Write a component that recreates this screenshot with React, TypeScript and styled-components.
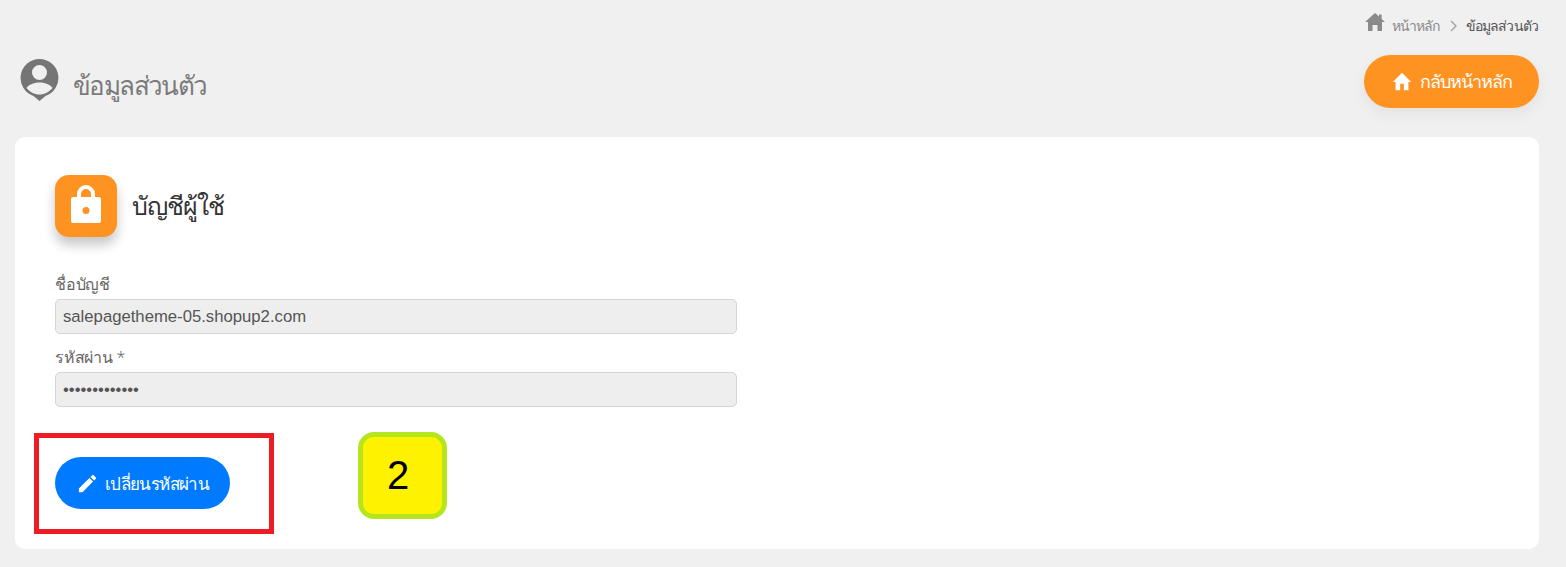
import React from "react";
import styled, { createGlobalStyle } from "styled-components";

const Global = createGlobalStyle`
  html, body { margin: 0; padding: 0; background: #f0f0f0; }
  body { font-family: "Noto Sans", "Liberation Sans", sans-serif; }
  * { box-sizing: border-box; }
`;
const Page = styled.div`
  position: relative;
  width: 1566px;
  height: 567px;
  padding: 0 27px 0 15px;
  overflow: hidden;
  background: #f0f0f0;
`;
const Breadcrumb = styled.nav`
  height: 55px;
  padding: 12px 1px 0 0;
  display: flex;
  justify-content: flex-end;
  align-items: flex-start;
  font-size: 14px;
  line-height: 28px;
  color: #8a8a8a;
  letter-spacing: -0.85px;
`;
const Crumb = styled.span<{ $active?: boolean }>`
  color: ${(p) => (p.$active ? "#555" : "#8a8a8a")};
  margin-left: ${(p) => (p.$active ? "8px" : "7px")};
`;
const Chevron = styled.svg`
  margin: 8px 0 0 10px;
`;
const CrumbHomeIcon = styled.svg`
  margin-top: 1px;
`;
const Header = styled.header`
  height: 82px;
  display: flex;
  justify-content: space-between;
  align-items: flex-start;
`;
const TitleWrap = styled.div`
  display: flex;
  align-items: flex-start;
  padding-left: 5px;
  gap: 14px;
`;
const PersonIcon = styled.svg`
  margin-top: 4px;
`;
const Title = styled.h1`
  margin: 8px 0 0;
  font-size: 26px;
  line-height: 44px;
  font-weight: 300;
  color: #7a7a7a;
  letter-spacing: -1.6px;
`;
const BackButton = styled.button`
  width: 175px;
  height: 53px;
  border: 0;
  border-radius: 27px;
  background: #ff9321;
  color: #fff;
  display: flex;
  align-items: center;
  justify-content: center;
  gap: 7px;
  font: 500 18px "Noto Sans", sans-serif;
  letter-spacing: -0.95px;
  box-shadow: 0 6px 16px rgba(0, 0, 0, 0.06);
`;
const Card = styled.section`
  width: 1524px;
  height: 412px;
  background: #fff;
  border-radius: 10px;
  padding: 38px 40px 0;
`;
const CardHead = styled.div`
  display: flex;
  align-items: center;
  gap: 15px;
  margin-bottom: 36px;
`;
const LockTile = styled.div`
  width: 62px;
  height: 62px;
  padding-bottom: 4px;
  border-radius: 14px;
  background: #ff9321;
  display: flex;
  align-items: center;
  justify-content: center;
  box-shadow: 0 8px 12px rgba(0, 0, 0, 0.22);
`;
const CardTitle = styled.h2`
  margin: 0 0 3px;
  font-size: 25px;
  line-height: 36px;
  font-weight: 300;
  color: #333;
  letter-spacing: -1px;
`;
const Field = styled.div`
  width: 682px;
  margin-bottom: 12px;
`;
const Label = styled.label`
  display: block;
  height: 26px;
  font-size: 16px;
  line-height: 23px;
  font-weight: 300;
  color: #666;
  letter-spacing: -0.25px;
`;
const Input = styled.input`
  display: block;
  width: 100%;
  height: 35px;
  padding: 0 7px;
  background: #eee;
  border: 1px solid #d4d4d4;
  border-radius: 5px;
  font: 16.7px "Liberation Sans", Arial, sans-serif;
  color: #555;
  outline: 0;
`;
const EditButton = styled.button`
  margin-top: 50px;
  width: 175px;
  height: 52px;
  border: 0;
  border-radius: 26px;
  background: #007bff;
  color: #fff;
  display: flex;
  align-items: center;
  justify-content: center;
  gap: 6px;
  font: 500 17px "Noto Sans", sans-serif;
  letter-spacing: -0.6px;
`;
const RedFrame = styled.div`
  position: absolute;
  left: 34px;
  top: 433px;
  width: 240px;
  height: 101px;
  border: 5px solid #ed1c24;
`;
const Badge = styled.div`
  position: absolute;
  left: 358px;
  top: 432px;
  width: 89px;
  height: 87px;
  padding-right: 9px;
  background: #fff200;
  border: 5px solid #b5e61d;
  border-radius: 16px;
  display: flex;
  align-items: center;
  justify-content: center;
  font: 40px "Liberation Sans", Arial, sans-serif;
  color: #000;
`;

const CrumbHome = () => (
  <CrumbHomeIcon width="20" height="18" viewBox="0 0 20 18" fill="#8a8a8a">
    <path d="M10 0l4 3.600V1.500h2.600v4.400L20 9h-3v9h-4.500v-6h-5v6H3V9H0z" />
  </CrumbHomeIcon>
);
const ButtonHome = () => (
  <svg width="22" height="22" viewBox="0 0 24 24" fill="#fff">
    <path d="M10 21v-7h4v7h5v-9h3L12 2 2 12h3v9z" />
  </svg>
);

export default function App() {
  return (
    <Page>
      <Global />
      <Breadcrumb>
        <CrumbHome />
        <Crumb>หน้าหลัก</Crumb>
        <Chevron width="8" height="12" viewBox="0 0 8 12" fill="none" stroke="#a0a0a0" strokeWidth="1.4">
          <path d="M1 1l5 5-5 5" />
        </Chevron>
        <Crumb $active>ข้อมูลส่วนตัว</Crumb>
      </Breadcrumb>
      <Header>
        <TitleWrap>
          <PersonIcon width="39" height="44" viewBox="0 0 39 44">
            <path
              fill="#757575"
              fillRule="evenodd"
              d="M19.500 0a19 19 0 0 1 6 37l-6 5-6-5a19 19 0 0 1 6-37zM19.500 6a7.500 7.500 0 1 0 0 15 7.500 7.500 0 0 0 0-15zM19.500 23.500c-6 0-11.500 2.500-13 5.500 3 3.800 8 6.500 13 6.500s10-2.700 13-6.500c-1.500-3-7-5.500-13-5.500z"
            />
          </PersonIcon>
          <Title>ข้อมูลส่วนตัว</Title>
        </TitleWrap>
        <BackButton>
          <ButtonHome />
          กลับหน้าหลัก
        </BackButton>
      </Header>
      <Card>
        <CardHead>
          <LockTile>
            <svg width="30" height="38" viewBox="0 0 30 38">
              <path
                fill="#fff"
                fillRule="evenodd"
                d="M6 12V9a9 9 0 0 1 18 0v3h4a2 2 0 0 1 2 2v22a2 2 0 0 1-2 2H2a2 2 0 0 1-2-2V14a2 2 0 0 1 2-2zM10 12h10V9a5 5 0 0 0-10 0zM15 22a3.500 3.500 0 1 0 0 7 3.500 3.500 0 0 0 0-7z"
              />
            </svg>
          </LockTile>
          <CardTitle>บัญชีผู้ใช้</CardTitle>
        </CardHead>
        <Field>
          <Label>ชื่อบัญชี</Label>
          <Input readOnly value="salepagetheme-05.shopup2.com" />
        </Field>
        <Field>
          <Label>รหัสผ่าน *</Label>
          <Input readOnly type="password" value="1234567890123" />
        </Field>
        <EditButton>
          <svg width="23" height="23" viewBox="0 0 24 24" fill="#fff">
            <path d="M3 17.250V21h3.750L17.810 9.940l-3.750-3.750L3 17.250zM20.710 7.040a1 1 0 0 0 0-1.410l-2.340-2.340a1 1 0 0 0-1.410 0l-1.830 1.830 3.750 3.750 1.830-1.830z" />
          </svg>
          เปลี่ยนรหัสผ่าน
        </EditButton>
      </Card>
      <RedFrame />
      <Badge>2</Badge>
    </Page>
  );
}
